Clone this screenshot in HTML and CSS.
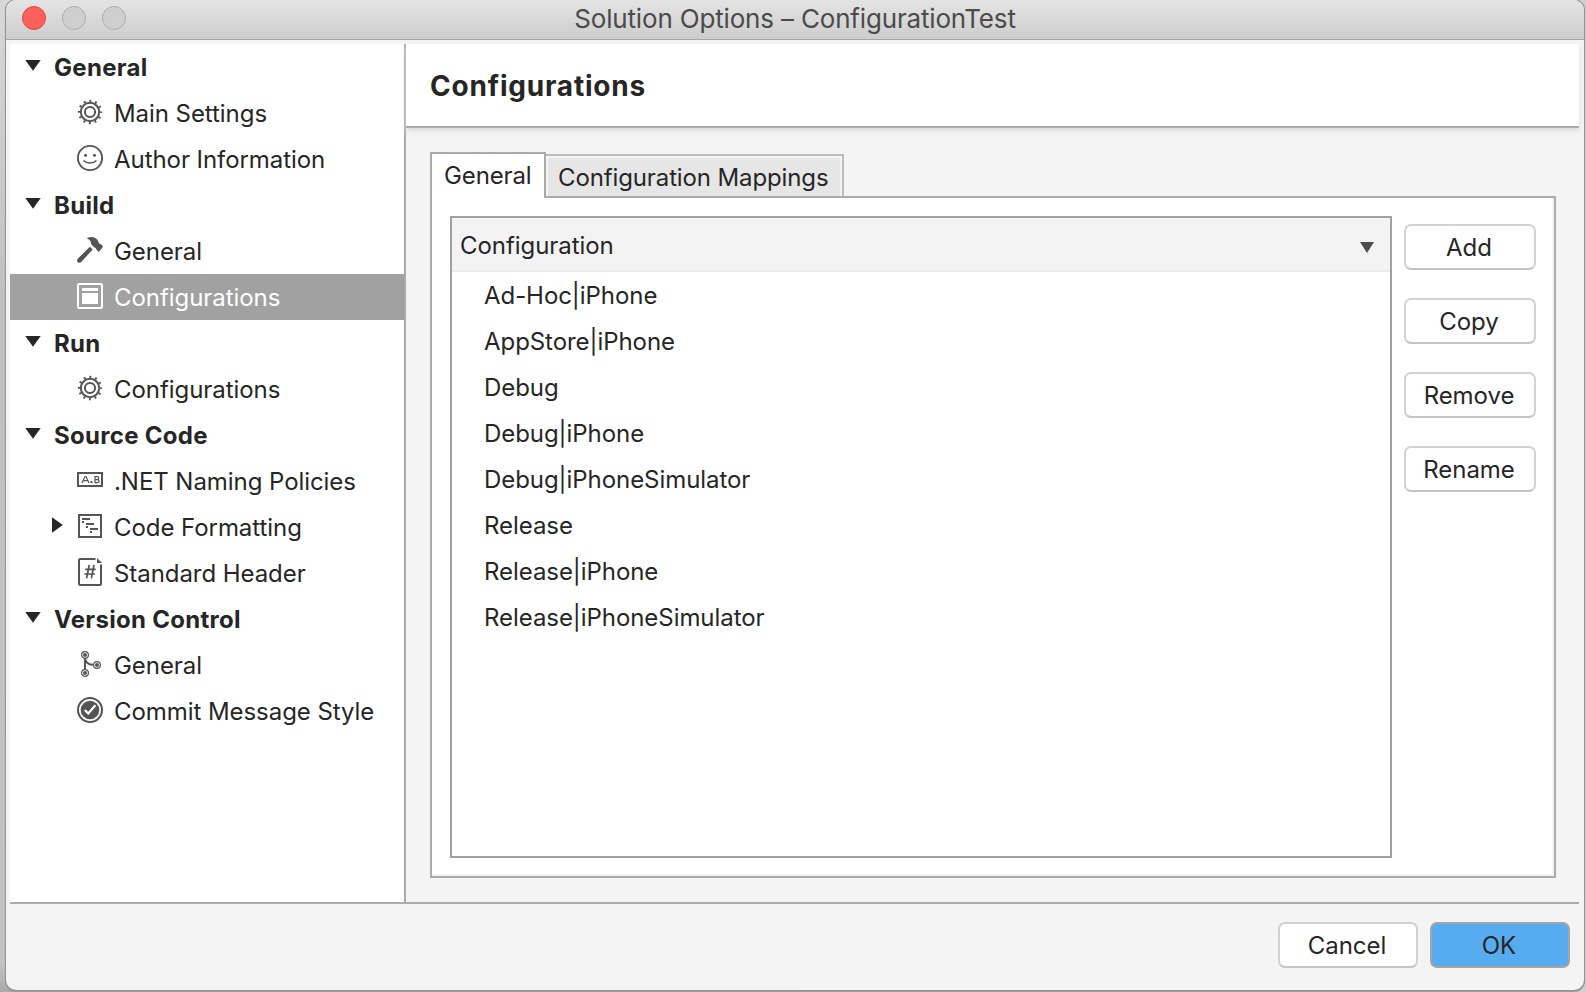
FILE: index.html
```html
<!DOCTYPE html>
<html lang="en">
<head>
<meta charset="utf-8">
<title>Solution Options – ConfigurationTest</title>
<link rel="stylesheet" href="styles.css">
</head>
<body>
<svg class="defs" width="0" height="0">
  <defs>
    <symbol id="gear" viewBox="0 0 26 26">
      <g fill="none" stroke="currentColor">
        <circle cx="13" cy="13" r="9.2" stroke-width="2"/>
        <circle cx="13" cy="13" r="5.1" stroke-width="2"/>
        <circle cx="13" cy="13" r="11" stroke-width="2.4" stroke-dasharray="1.9 3.86" stroke-dashoffset=".95"/>
      </g>
    </symbol>
    <symbol id="down" viewBox="0 0 16 11"><path d="M.3 0h15.4L8 10.8z" fill="currentColor"/></symbol>
  </defs>
</svg>
<div class="window">
  <header class="titlebar">
    <div class="lights"><i class="light close"></i><i class="light"></i><i class="light"></i></div>
    <div class="title">Solution Options – ConfigurationTest</div>
  </header>
  <div class="body">
    <nav class="sidebar">
      <div class="group"><svg class="tri"><use href="#down"/></svg><span>General</span></div>
      <div class="item"><svg class="icon"><use href="#gear"/></svg><span>Main Settings</span></div>
      <div class="item"><svg class="icon" viewBox="0 0 26 26"><g fill="none" stroke="currentColor" stroke-width="1.9"><circle cx="13" cy="13" r="12.1"/><path d="M6.500 15.500Q9 18 13 18T19.500 15.500" stroke-width="1.500"/></g><circle cx="8.500" cy="10.300" r="1.500" fill="currentColor"/><circle cx="17.500" cy="10.300" r="1.500" fill="currentColor"/></svg><span>Author Information</span></div>
      <div class="group"><svg class="tri"><use href="#down"/></svg><span>Build</span></div>
      <div class="item"><svg class="icon" viewBox="0 0 26 26"><path d="M9.600 1.200C13.500-.8 18-.2 20.200 2.500L22.300 6.500C23.300 7.500 24.200 6.900 25 8.200L26 9.700 21.800 15 19.400 12.600C19.200 11 18.500 10.700 17 10.200L14 7C14.500 4 12 2 9.600 1.200zM12.900 9.800L15.700 12.500 4 25.200C2 27-1 24.500.5 22z" fill="currentColor"/></svg><span>General</span></div>
      <div class="item selected"><svg class="icon" viewBox="0 0 26 26"><rect x="1" y="1" width="24" height="24" rx="1" fill="none" stroke="currentColor" stroke-width="2"/><path d="M5 5h16v3H5zM5 10h16v11H5z" fill="currentColor"/></svg><span>Configurations</span></div>
      <div class="group"><svg class="tri"><use href="#down"/></svg><span>Run</span></div>
      <div class="item"><svg class="icon"><use href="#gear"/></svg><span>Configurations</span></div>
      <div class="group"><svg class="tri"><use href="#down"/></svg><span>Source Code</span></div>
      <div class="item"><svg class="icon" viewBox="0 0 26 26"><rect x="1" y="6" width="24" height="13" fill="none" stroke="currentColor" stroke-width="2"/><path d="M5 16L8 9.500H9L12 16M6.500 13.700H10.500M18 16V9.700H20.200Q21.800 9.700 21.800 11.100T20.200 12.600H18M20.200 12.600Q22 12.600 22 14.200T20.200 15.700H18" fill="none" stroke="currentColor" stroke-width="1.200"/><path d="M13.500 14h2v2h-2z" fill="currentColor"/></svg><span>.NET Naming Policies</span></div>
      <div class="item"><svg class="tri side" viewBox="0 0 11 16"><path d="M0 .3v15.400L10.800 8z" fill="currentColor"/></svg><svg class="icon" viewBox="0 0 26 26"><path d="M2 2h22v22H2z" fill="none" stroke="currentColor" stroke-width="2"/><path d="M5 5h8v2H5zM5 8h2v2H5zM9 10h8v2H9zM9 13h2v2H9zM13 15h8v2h-8zM13 18h2v2h-2z" fill="currentColor"/></svg><span>Code Formatting</span></div>
      <div class="item"><svg class="icon" viewBox="0 0 26 26"><path d="M18.500 0H3Q2 0 2 1V25Q2 26 3 26H23Q24 26 24 25V5.500" fill="none" stroke="currentColor" stroke-width="2"/><path d="M20-1l5 5h-5z" fill="currentColor"/><path d="M12.200 6L9.600 19.300M17 6L14.400 19.300M8.200 10.300H18.700M7.400 15H17.900" fill="none" stroke="currentColor" stroke-width="1.700"/></svg><span>Standard Header</span></div>
      <div class="group"><svg class="tri"><use href="#down"/></svg><span>Version Control</span></div>
      <div class="item"><svg class="icon" viewBox="0 0 26 26"><g fill="none" stroke="currentColor"><path d="M8 7.500V18.500M8 8Q9.500 13.800 16.500 13.800" stroke-width="2"/><g stroke-width="1.200"><circle cx="8" cy="4" r="3.400"/><circle cx="8" cy="22" r="3.400"/><circle cx="20" cy="14" r="3.400"/></g></g><g fill="currentColor"><circle cx="8" cy="4" r="2"/><circle cx="8" cy="22" r="2"/><circle cx="20" cy="14" r="2"/></g></svg><span>General</span></div>
      <div class="item"><svg class="icon" viewBox="0 0 26 26"><circle cx="13" cy="13" r="12" fill="none" stroke="currentColor" stroke-width="2"/><circle cx="13" cy="13" r="9.300" fill="currentColor"/><path d="M7.700 13L11.300 16.400 18.400 8.300" fill="none" stroke="#fff" stroke-width="2.200"/></svg><span>Commit Message Style</span></div>
    </nav>
    <main class="main">
      <h1 class="heading">Configurations</h1>
      <div class="tabs">
        <div class="tab active">General</div>
        <div class="tab">Configuration Mappings</div>
      </div>
      <section class="panel">
        <div class="table">
          <div class="thead"><span>Configuration</span><svg class="sort" viewBox="0 0 14 12"><path d="M0 0h14L7 11z" fill="currentColor"/></svg></div>
          <div class="row">Ad-Hoc|iPhone</div>
          <div class="row">AppStore|iPhone</div>
          <div class="row">Debug</div>
          <div class="row">Debug|iPhone</div>
          <div class="row">Debug|iPhoneSimulator</div>
          <div class="row">Release</div>
          <div class="row">Release|iPhone</div>
          <div class="row">Release|iPhoneSimulator</div>
        </div>
        <div class="actions">
          <button class="btn">Add</button>
          <button class="btn">Copy</button>
          <button class="btn">Remove</button>
          <button class="btn">Rename</button>
        </div>
      </section>
    </main>
  </div>
  <footer class="footer"><button class="btn wide">Cancel</button><button class="btn wide primary">OK</button></footer>
</div>
</body>
</html>
```
FILE: styles.css
```css
* { box-sizing: border-box; }
body { margin: 0; height: 992px; overflow: hidden; background: linear-gradient(90deg, #0000 50%, #d0d0d0 50%), linear-gradient(#d6d8dc, #bfc0c2 30%, #c2c3c5 97%, #aaa); font: 24px/46px Inter, sans-serif; letter-spacing: -.06px; color: #262626; padding: 0 2px 2px 6px; }
.defs { position: absolute; }
.window { height: 990px; background: #f4f4f4; border-radius: 10px; overflow: hidden; box-shadow: 0 0 0 1px #939393, 0 1px 1px 1px #999; display: flex; flex-direction: column; }
.titlebar { height: 40px; flex: none; background: linear-gradient(#e4e4e4, #cdcdcd); border-bottom: 1px solid #a5a5a5; display: grid; grid-template-columns: 100%; align-items: center; }
.lights { grid-area: 1 / 1; display: flex; gap: 16px; padding: 0 0 3px 16px; }
.light { width: 24px; height: 24px; border-radius: 50%; background: #cfcfcf; border: 1px solid #adadad; }
.close { background: #fc605c; border-color: #e2463f; }
.title { grid-area: 1 / 1; justify-self: center; line-height: 36px; padding-bottom: 2px; font-size: 26px; letter-spacing: -.17px; color: #4b4b4b; }
.body { display: flex; height: 864px; flex: none; padding: 4px 5px 0 4px; }
.sidebar { width: 396px; background: #fff; border-right: 2px solid #ababab; border-bottom: 2px solid #ababab; }
.group, .item { height: 46px; display: flex; align-items: center; white-space: nowrap; }
.group span, .item span { padding-top: 2px; }
.group { font-weight: 700; padding-left: 15px; gap: 13px; letter-spacing: .3px; }
.item { padding-left: 67px; gap: 11px; position: relative; }
.tri { width: 16px; height: 11px; margin-bottom: 4px; }
.side { position: absolute; left: 42px; top: 13px; width: 11px; height: 16px; margin: 0; }
.icon { width: 26px; height: 26px; color: #555; margin-bottom: 2px; overflow: visible; }
.selected { background: #a1a1a1; color: #fff; }
.selected .icon { color: #fff; }
.main { width: 1173px; border-bottom: 2px solid #ababab; }
.heading { margin: 0; height: 84px; background: #fff; border-bottom: 2px solid #ababab; box-shadow: 0 3px 5px #ddd; font-size: 28px; line-height: 84px; letter-spacing: .8px; padding-left: 24px; }
.tabs { display: flex; align-items: flex-end; margin: 24px 0 0 24px; height: 44px; }
.tab { height: 42px; width: 298px; border: 2px solid #bcbcbc; border-width: 2px 2px 0 0; background: #e6e6e6; box-shadow: inset -2px 2px #f4f4f4, inset 2px 0 #f4f4f4; padding-left: 12px; line-height: 44px; letter-spacing: -.12px; }
.active { width: 116px; height: 46px; margin-bottom: -2px; border: 2px solid #ababab; border-bottom: 0; background: #fff; box-shadow: none; z-index: 1; line-height: 43px; }
.panel { margin-left: 24px; width: 1126px; height: 682px; border: 2px solid #ababab; background: #fff; box-shadow: inset -2px -2px #f4f4f4; padding: 18px; display: flex; gap: 12px; }
.table { width: 942px; height: 642px; border: 2px solid #a1a1a1; flex: none; }
.thead { height: 54px; background: #f3f3f3; border-bottom: 2px solid #ececec; padding: 3px 16px 0 8px; display: flex; justify-content: space-between; align-items: center; margin-bottom: 1px; }
.sort { width: 14px; height: 12px; color: #4c4c4c; margin-top: 4px; }
.row { padding-left: 32px; height: 46px; }
.actions { display: flex; flex-direction: column; gap: 28px; padding-top: 8px; }
.btn { width: 132px; height: 46px; border: 2px solid #d2d2d2; border-bottom-color: #c4c4c4; border-radius: 7px; background: #fff; font: inherit; letter-spacing: inherit; line-height: 40px; color: #262626; padding: 2px 2px 0 0; }
.footer { display: flex; justify-content: flex-end; gap: 12px; padding: 18px 14px; }
.wide { width: 140px; }
.primary { background: #57acf0; border-color: #a5a5a5; }
```
